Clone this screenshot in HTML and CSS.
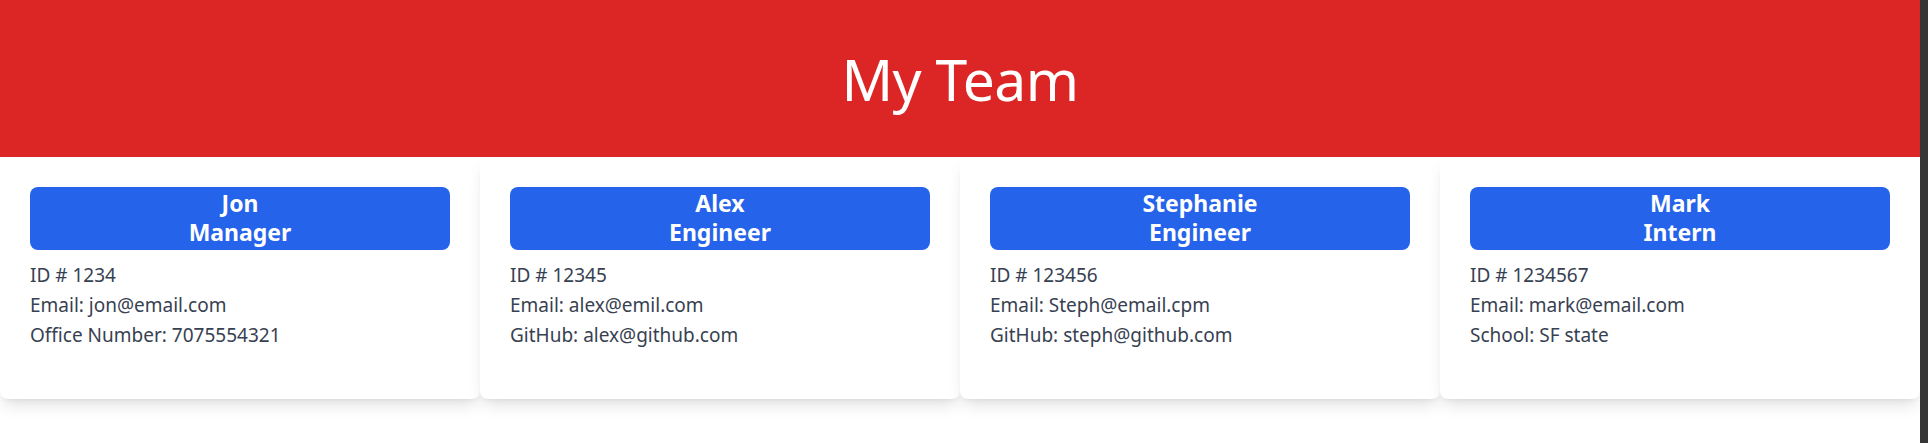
FILE: index.html
```html
<!DOCTYPE html>
<html lang="en">
<head>
<meta charset="utf-8">
<title>My Team</title>
<link rel="stylesheet" href="styles.css">
</head>
<body>
<div class="page">
  <div class="main">
    <header class="hero"><h1 class="hero-title">My Team</h1></header>
    <section class="team">
      <article class="card">
        <div class="badge"><div>Jon</div><div>Manager</div></div>
        <ul class="info">
          <li>ID # 1234</li>
          <li>Email: jon@email.com</li>
          <li>Office Number: 7075554321</li>
        </ul>
      </article>
      <article class="card">
        <div class="badge"><div>Alex</div><div>Engineer</div></div>
        <ul class="info">
          <li>ID # 12345</li>
          <li>Email: alex@emil.com</li>
          <li>GitHub: alex@github.com</li>
        </ul>
      </article>
      <article class="card">
        <div class="badge"><div>Stephanie</div><div>Engineer</div></div>
        <ul class="info">
          <li>ID # 123456</li>
          <li>Email: Steph@email.cpm</li>
          <li>GitHub: steph@github.com</li>
        </ul>
      </article>
      <article class="card">
        <div class="badge"><div>Mark</div><div>Intern</div></div>
        <ul class="info">
          <li>ID # 1234567</li>
          <li>Email: mark@email.com</li>
          <li>School: SF state</li>
        </ul>
      </article>
    </section>
  </div>
  <div class="scrollbar"></div>
</div>
</body>
</html>
```

FILE: styles.css
```css
* { box-sizing: border-box; }
html, body { margin: 0; padding: 0; }
body {
  font-family: "Noto Sans", "Open Sans", sans-serif;
  background: #ffffff;
  color: #374151;
}
.page {
  display: grid;
  grid-template-columns: 1fr 8px;
  height: 443px;
}
.main { min-width: 0; }
.scrollbar { background: #363636; }
.hero {
  background: #dc2626;
  height: 157px;
  display: flex;
  align-items: center;
  justify-content: center;
}
.hero-title {
  margin: 0;
  color: #ffffff;
  font-size: 57px;
  line-height: 60px;
  letter-spacing: -0.5px;
  font-weight: 400;
}
.team {
  display: grid;
  grid-template-columns: repeat(4, 1fr);
}
.card {
  background: #ffffff;
  border-radius: 8px;
  box-shadow: 0 10px 15px -3px rgba(0,0,0,0.1), 0 4px 6px -4px rgba(0,0,0,0.1);
  padding: 30px 30px 49px;
}
.badge {
  background: #2563eb;
  color: #ffffff;
  border-radius: 8px;
  height: 63px;
  padding-top: 2px;
  text-align: center;
  font-size: 23px;
  line-height: 29px;
  font-weight: 700;
}
.info {
  list-style: none;
  margin: 10px 0 0;
  padding: 0;
  font-size: 19px;
  line-height: 30px;
}
```
